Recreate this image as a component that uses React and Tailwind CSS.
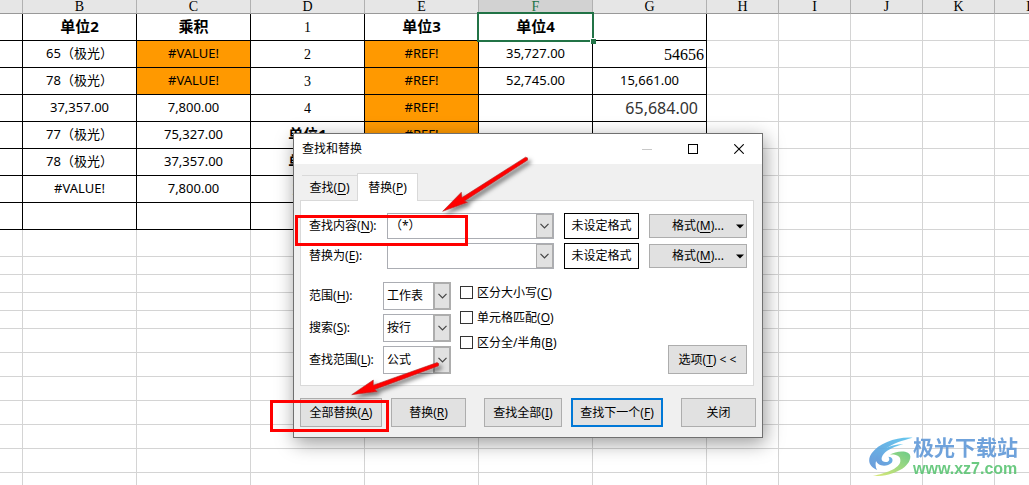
import React, { useState } from 'react';

const columns = ['', 'B', 'C', 'D', 'E', 'F', 'G', 'H', 'I', 'J', 'K', 'L', ''];

const colWidths = [
  'w-[23px]', 'w-[114px]', 'w-[114px]', 'w-[114px]', 'w-[114px]', 'w-[114px]', 'w-[114px]',
  'w-[72px]', 'w-[72px]', 'w-[72px]', 'w-[72px]', 'w-[72px]', '',
];

// kinds: h = heading, n = normal, e = error fill, s = serif number, r = serif right, big = pasted value
const rows = [
  [null, ['单位2', 'h'], ['乘积', 'h'], ['1', 's'], ['单位3', 'h'], ['单位4', 'h'], null],
  [null, ['65（极光）', 'n'], ['#VALUE!', 'e'], ['2', 's'], ['#REF!', 'e'], ['35,727.00', 'n'], ['54656', 'r']],
  [null, ['78（极光）', 'n'], ['#VALUE!', 'e'], ['3', 's'], ['#REF!', 'e'], ['52,745.00', 'n'], ['15,661.00', 'n']],
  [null, ['37,357.00', 'n'], ['7,800.00', 'n'], ['4', 's'], ['#REF!', 'e'], null, ['65,684.00', 'big']],
  [null, ['77（极光）', 'n'], ['75,327.00', 'n'], ['单位1', 'h'], ['#REF!', 'e'], null, null],
  [null, ['78（极光）', 'n'], ['37,357.00', 'n'], ['单位2', 'h'], null, null, null],
  [null, ['#VALUE!', 'n'], ['7,800.00', 'n'], ['乘积', 'h'], null, null, null],
  [null, null, null, null, null, null, null],
];

const emptyRows = [
  'h-[27px]', 'h-[18px]', 'h-[18px]', 'h-[18px]', 'h-[18px]', 'h-6', 'h-6',
  'h-6', 'h-6', 'h-6', 'h-6', 'h-6',
];

const kindClass = {
  h: 'text-center text-[15px] font-bold pb-[2px]',
  n: 'text-center text-[13px] pb-[2px]',
  e: 'text-center text-[13px] pb-[2px] bg-[#ff9900]',
  s: "text-center text-[14px] pt-[2px] font-['Liberation_Serif',serif]",
  r: "text-right text-[16px] pt-[2px] pr-[2px] font-['Liberation_Serif',serif]",
  big: 'text-right text-[16px] pr-2 text-[#333333]',
};

const Sheet = () => (
  <table className="w-full table-fixed border-separate border-spacing-0 text-black">
    <colgroup>
      {colWidths.map((w, i) => <col key={i} className={w} />)}
    </colgroup>
    <thead>
      <tr className="h-[14px]">
        {columns.map((c, i) => (
          <th
            key={i}
            className={`h-[14px] border-r border-b border-r-[#b1b1b1] border-b-[#999999] p-0 text-center font-['Liberation_Serif',serif] text-[14px] leading-[13px] font-normal ${
              c === 'F' ? 'bg-[#d2d2d2] text-[#217346]' : 'bg-[#e6e6e6]'
            }`}
          >
            {c}
          </th>
        ))}
      </tr>
    </thead>
    <tbody>
      {rows.map((row, r) => (
        <tr key={r} className="h-[27px]">
          {columns.map((c, i) => {
            const cell = row[i];
            const line = i < 7 ? 'border-black' : 'border-[#d4d4d4]';
            return (
              <td
                key={i}
                className={`relative border-r border-b leading-5 whitespace-nowrap ${line} ${cell ? kindClass[cell[1]] : ''}`}
              >
                {cell && cell[0]}
                {r === 0 && c === 'F' && (
                  <span className="absolute -top-0.5 -right-0.5 -bottom-0.5 -left-0.5 z-10 border-2 border-[#217346]">
                    <span className="absolute -right-1 -bottom-1 size-[6px] border-t border-l border-white bg-[#217346]" />
                  </span>
                )}
              </td>
            );
          })}
        </tr>
      ))}
      {emptyRows.map((h, r) => (
        <tr key={r} className={h}>
          {columns.map((c, i) => <td key={i} className="border-r border-b border-[#d4d4d4] p-0" />)}
        </tr>
      ))}
    </tbody>
  </table>
);

const Chevron = () => (
  <svg className="h-[6px] w-[9px]" viewBox="0 0 9 6" fill="none" stroke="#444444" strokeWidth="1.2">
    <path d="M0.5 0.8 4.5 4.8 8.5 0.8" />
  </svg>
);

const Key = ({ children }) => <>(<u className="underline-offset-2">{children}</u>)</>;

const Button = ({ className = '', primary, children }) => (
  <button
    type="button"
    className={`flex h-[29px] items-center justify-center bg-[#e1e1e1] whitespace-nowrap ${
      primary ? 'border-2 border-[#0078d7]' : 'border border-[#adadad]'
    } ${className}`}
  >
    {children}
  </button>
);

const ComboRow = ({ id, label, hotkey, value, onChange }) => (
  <>
    <label htmlFor={id} className="whitespace-nowrap">{label}<Key>{hotkey}</Key>:</label>
    <div className="flex h-[26px] border border-[#abadb3] bg-white">
      <input
        id={id}
        value={value}
        onChange={(e) => onChange(e.target.value)}
        className="min-w-0 flex-1 px-[2px] outline-none"
      />
      <button type="button" aria-label="展开" className="flex w-[17px] items-center justify-center border border-[#adadad] bg-[#e1e1e1]">
        <Chevron />
      </button>
    </div>
    <div className="flex h-[26px] items-center justify-center border border-black bg-white whitespace-nowrap">未设定格式</div>
    <button type="button" className="relative h-6 border border-[#adadad] bg-[#e1e1e1] whitespace-nowrap">
      格式<Key>M</Key>...
      <svg className="absolute top-[9px] right-[2px] h-[5px] w-2" viewBox="0 0 8 5"><path d="M0 0.5H8L4 4.5Z" /></svg>
    </button>
  </>
);

const SelectRow = ({ id, label, hotkey, options }) => (
  <>
    <label htmlFor={id} className="whitespace-nowrap">{label}<Key>{hotkey}</Key>:</label>
    <div className="relative h-7">
      <select id={id} className="h-full w-full appearance-none border border-[#abadb3] bg-white pl-[3px] outline-none">
        {options.map((o) => <option key={o}>{o}</option>)}
      </select>
      <span className="pointer-events-none absolute inset-y-0 right-0 flex w-[18px] items-center justify-center border-2 border-[#adadad] bg-[#e1e1e1]">
        <Chevron />
      </span>
    </div>
  </>
);

const Check = ({ label, hotkey }) => (
  <label className="flex h-[13px] items-center gap-1 leading-none whitespace-nowrap">
    <input type="checkbox" className="size-[13px] appearance-none border border-[#333333] bg-white checked:bg-[#0078d7]" />
    <span>{label}<Key>{hotkey}</Key></span>
  </label>
);

// red boxes and arrows, in dialog coordinates
const Marks = () => (
  <svg className="pointer-events-none absolute top-0 left-0 h-[304px] w-[470px] overflow-visible" viewBox="0 0 470 304">
    <defs>
      <filter id="drop" x="-20%" y="-20%" width="150%" height="160%">
        <feDropShadow dx="3" dy="3" stdDeviation="2" floodColor="#000" floodOpacity="0.5" />
      </filter>
    </defs>
    <g fill="none" stroke="#ff0000" strokeWidth="3">
      <rect x="2.5" y="82.5" width="170" height="28" />
      <rect x="-22.5" y="267.5" width="116" height="29" />
    </g>
    <g fill="#ff0000" stroke="#a33" strokeWidth="0.6" filter="url(#drop)">
      <path d="M148.7 77.3 167.3 58.3 168 63.6 231.5 23.2Q234.5 23 233.5 26.2L170.5 67 173.5 68.3Z" />
      <path d="M57.7 260.7 79.3 246 79.3 251.2 143 228.6Q146 229.3 144.3 232L80.8 255.4 83.3 257.5Z" />
    </g>
  </svg>
);

const FindReplaceDialog = () => {
  const [find, setFind] = useState('（*）');
  const [replace, setReplace] = useState('');

  return (
    <div
      role="dialog"
      aria-label="查找和替换"
      className="absolute top-[133px] left-[293px] z-20 w-[470px] border border-[#707070] bg-[#f0f0f0] text-[12px] leading-4 text-black shadow-[2px_5px_18px_rgba(0,0,0,0.4)]"
    >
      <div className="flex h-[30px] items-center bg-white pl-2">
        <h1 className="flex-1">查找和替换</h1>
        <button type="button" aria-label="最小化" className="flex h-full w-[46px] items-center justify-center">
          <span className="h-px w-[10px] bg-[#c8c8c8]" />
        </button>
        <button type="button" aria-label="最大化" className="flex h-full w-[46px] items-center justify-center">
          <span className="size-[10px] border border-black" />
        </button>
        <button type="button" aria-label="关闭" className="flex h-full w-[46px] items-center justify-center">
          <svg className="size-[10px]" viewBox="0 0 10 10" stroke="#000" strokeWidth="1.1"><path d="M0.3 0.3 9.7 9.7M9.7 0.3 0.3 9.7" /></svg>
        </button>
      </div>

      <div className="px-[6px] pt-[9px] pb-[10px]">
        <div role="tablist" className="flex items-end pl-[2px]">
          <button type="button" role="tab" aria-selected="false" className="h-[25px] w-[55px] border-t border-[#d9d9d9]">
            查找<Key>D</Key>
          </button>
          <button type="button" role="tab" aria-selected="true" className="z-10 -mb-px h-7 w-[61px] border border-b-0 border-[#d9d9d9] bg-white">
            替换<Key>P</Key>
          </button>
        </div>

        <div role="tabpanel" className="mr-[2px] border border-[#d9d9d9] bg-white pt-3 pr-[6px] pb-[11px] pl-2">
          <div className="grid grid-cols-[1fr_167px_75px_98px] items-center gap-x-[10px] gap-y-1">
            <ComboRow id="find" label="查找内容" hotkey="N" value={find} onChange={setFind} />
            <ComboRow id="replace" label="替换为" hotkey="E" value={replace} onChange={setReplace} />
          </div>

          <div className="mt-[13px] flex">
            <div className="grid grid-cols-[74px_68px] items-center gap-y-1">
              <SelectRow id="within" label="范围" hotkey="H" options={['工作表', '工作簿']} />
              <SelectRow id="search" label="搜索" hotkey="S" options={['按行', '按列']} />
              <SelectRow id="lookin" label="查找范围" hotkey="L" options={['公式']} />
            </div>
            <div className="flex flex-1 flex-col gap-3 pt-1 pl-[9px]">
              <Check label="区分大小写" hotkey="C" />
              <Check label="单元格匹配" hotkey="O" />
              <Check label="区分全/半角" hotkey="B" />
            </div>
            <Button className="w-[79px] self-end">选项<Key>T</Key>&nbsp;&lt; &lt;</Button>
          </div>
        </div>

        <div className="mt-3 flex justify-between">
          <div className="flex gap-[9px]">
            <Button className="w-[82px]">全部替换<Key>A</Key></Button>
            <Button className="w-[75px]">替换<Key>R</Key></Button>
          </div>
          <div className="flex gap-[9px]">
            <Button className="w-[78px]">查找全部<Key>I</Key></Button>
            <Button primary className="w-[92px]">查找下一个<Key>F</Key></Button>
          </div>
          <Button className="w-[75px]">关闭</Button>
        </div>
      </div>
      <Marks />
    </div>
  );
};

const Watermark = () => (
  <div className="absolute right-[11px] bottom-[7px] z-10 flex items-center opacity-90">
    <svg className="h-[41px] w-[44px]" viewBox="0 0 132 123">
      <defs>
        <linearGradient id="wmBlue" x1="1" y1="0" x2="0" y2="1">
          <stop offset="0" stopColor="#57c4ee" />
          <stop offset="1" stopColor="#5b8fd6" />
        </linearGradient>
        <linearGradient id="wmGreen" x1="1" y1="0" x2="0" y2="1">
          <stop offset="0" stopColor="#5cc57c" />
          <stop offset="1" stopColor="#d9e86a" />
        </linearGradient>
      </defs>
      <path fill="url(#wmBlue)" d="M131 5C80 2 30 22 8 52C-6 72 0 92 24 102C14 84 22 62 46 42C72 20 100 14 131 5Z" />
      <path fill="url(#wmBlue)" d="M103 24C60 26 18 46 20 70C22 90 52 96 68 80C74 72 70 62 58 62C64 70 60 78 50 78C36 78 34 66 44 54C56 40 78 32 103 24Z" />
      <path fill="url(#wmGreen)" d="M62 56C80 44 124 40 124 62C124 92 74 122 12 120C50 112 92 98 94 76C96 60 82 54 62 56Z" />
    </svg>
    <div className="flex flex-col">
      <span className="text-[21px] leading-[26px] font-bold text-[#6099d8]">极光下载站</span>
      <span className="font-['Liberation_Sans',sans-serif] text-[16px] leading-[18px] font-bold text-[#5cc574]">www.xz7.com</span>
    </div>
  </div>
);

const App = () => (
  <main className="relative h-screen overflow-hidden bg-white font-['Noto_Sans','Noto_Sans_CJK_SC',sans-serif]">
    <Sheet />
    <FindReplaceDialog />
    <Watermark />
  </main>
);

export default App;
